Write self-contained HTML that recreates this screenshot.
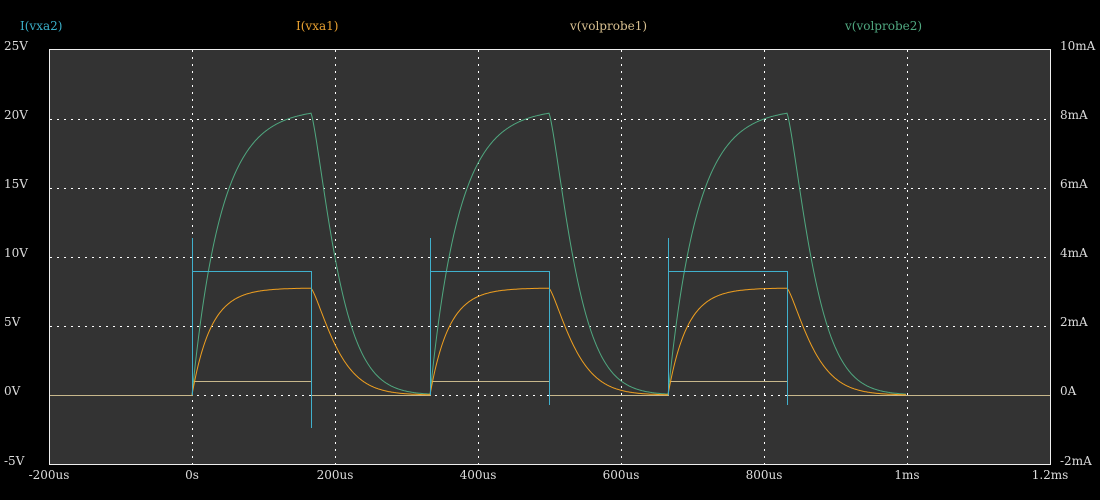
<!DOCTYPE html>
<html><head><meta charset="utf-8"><style>
body{margin:0;background:#000;width:1100px;height:500px;overflow:hidden;font-family:"DejaVu Serif","Liberation Serif",serif;}
svg{display:block}
text{font-size:12px}
</style></head><body>
<svg id="s" width="1100" height="500" xmlns="http://www.w3.org/2000/svg">
<rect x="0" y="0" width="1100" height="500" fill="#000"/>
<rect x="49.5" y="49.5" width="1001" height="415" fill="#333" stroke="#eee" stroke-width="1"/>
<g stroke="#fff" stroke-width="1" stroke-dasharray="2,5">
<line x1="192.5" y1="50" x2="192.5" y2="464"/><line x1="335.5" y1="50" x2="335.5" y2="464"/>
<line x1="478.5" y1="50" x2="478.5" y2="464"/><line x1="621.5" y1="50" x2="621.5" y2="464"/>
<line x1="764.5" y1="50" x2="764.5" y2="464"/><line x1="907.5" y1="50" x2="907.5" y2="464"/>
<line x1="50" y1="119.5" x2="1050" y2="119.5"/><line x1="50" y1="188.5" x2="1050" y2="188.5"/>
<line x1="50" y1="257.5" x2="1050" y2="257.5"/><line x1="50" y1="326.5" x2="1050" y2="326.5"/>
<line x1="50" y1="395.5" x2="1050" y2="395.5"/>
</g>
<g fill="#ddd">
<text x="4" y="50">25V</text><text x="4" y="119">20V</text><text x="4" y="188">15V</text>
<text x="4" y="257">10V</text><text x="4" y="326">5V</text><text x="4" y="395">0V</text><text x="4" y="465">-5V</text>
<text x="1060" y="50">10mA</text><text x="1060" y="119">8mA</text><text x="1060" y="188">6mA</text>
<text x="1060" y="257">4mA</text><text x="1060" y="326">2mA</text><text x="1060" y="395">0A</text><text x="1060" y="465">-2mA</text>
<g text-anchor="middle">
<text x="49" y="479">-200us</text><text x="192" y="479">0s</text><text x="335" y="479">200us</text>
<text x="478" y="479">400us</text><text x="621" y="479">600us</text><text x="764" y="479">800us</text>
<text x="907" y="479">1ms</text><text x="1050" y="479">1.2ms</text></g>
</g>
<text x="20" y="30" fill="#3aaec8">I(vxa2)</text>
<text x="296" y="30" fill="#e8a030">I(vxa1)</text>
<text x="570" y="30" fill="#d8c090">v(volprobe1)</text>
<text x="845" y="30" fill="#50a880">v(volprobe2)</text>
<g id="tr" fill="none" stroke-width="1"></g>
</svg>
<script>
var g=document.getElementById('tr');
function add(d,c){var p=document.createElementNS('http://www.w3.org/2000/svg','path');p.setAttribute('d',d);p.setAttribute('stroke',c);g.appendChild(p);}
var starts=[192,430,668],P=119,base=395;
var green='',orange='',tan='M50,395.5',cyan='';
starts.forEach(function(s,i){
 var e=s+P;
 tan+=' L'+s+'.5,395.5 L'+s+'.5,381.5 L'+e+'.5,381.5 L'+e+'.5,395.5';
 var d='M'+s+','+base;
 for(var t=0;t<=P;t++){var v=20.7*(1-Math.exp(-t/29));d+=' L'+(s+t)+','+(base-v*13.84).toFixed(1);}
 var v0=20.7*(1-Math.exp(-P/29));
 for(var t=1;t<=119;t++){var v=v0*Math.exp(-Math.pow(t/31,1.3));d+=' L'+(e+t)+','+(base-v*13.84).toFixed(1);}
 green+=d;
 d='M'+s+','+base;
 for(var t=0;t<=P;t++){var v=107*(1-Math.exp(-t/19));d+=' L'+(s+t)+','+(base-v).toFixed(1);}
 var o0=107*(1-Math.exp(-P/19));
 for(var t=1;t<=119;t++){var v=o0*Math.exp(-Math.pow(t/30,1.3));d+=' L'+(e+t)+','+(base-v).toFixed(1);}
 orange+=d;
 var lo=i==0?428:405;
 cyan+='M'+s+'.5,395 L'+s+'.5,238 M'+s+'.5,271.5 L'+e+'.5,271.5 L'+e+'.5,'+lo+' ';
});
tan+=' L1050,395.5';
add(tan,'#c8b88c');
add(green,'#50a880');
add(orange,'#f0a020');
add(cyan,'#40b0cc');
</script>
</body></html>
